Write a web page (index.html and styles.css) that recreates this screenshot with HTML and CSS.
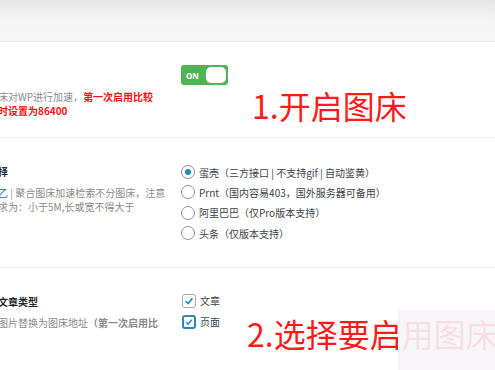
FILE: index.html
```html
<!DOCTYPE html>
<html lang="zh-CN">
<head>
    <meta charset="UTF-8">
    <meta name="viewport" content="width=device-width, initial-scale=1.0">
    <title>图床设置</title>
    <link rel="stylesheet" href="styles.css">
</head>
<body>
    <div class="panel">
        <div class="panel-head"></div>

        <!-- 开启图床 -->
        <div class="opt-row row-switch">
            <div class="opt-info">
                <div class="opt-title">开启图床</div>
                <p class="opt-desc">开启后使用第三方图床对WP进行加速，<strong class="warn">第一次启用比较</strong><br><strong class="warn">耗时，建议将缓存同时设置为86400</strong></p>
            </div>
            <div class="opt-control">
                <span class="switch"><span class="switch-text">ON</span><span class="switch-knob"></span></span>
            </div>
        </div>

        <!-- 图床选择 -->
        <div class="opt-row row-radio">
            <div class="opt-info">
                <div class="opt-title">默认图床接口服务选择</div>
                <p class="opt-desc"><a href="#">查看各图床接口说明乙</a> | 聚合图床加速检索不分图床，注意<br>上传图片格式大小要求为：小于5M,长或宽不得大于</p>
            </div>
            <div class="opt-control">
                <label class="choice"><input type="radio" name="bed" checked>蛋壳（三方接口 | 不支持gif | 自动鉴黄）</label>
                <label class="choice"><input type="radio" name="bed">Prnt（国内容易403，国外服务器可备用）</label>
                <label class="choice"><input type="radio" name="bed">阿里巴巴（仅Pro版本支持）</label>
                <label class="choice"><input type="radio" name="bed">头条（仅版本支持）</label>
            </div>
        </div>

        <!-- 文章类型 -->
        <div class="opt-row row-check">
            <div class="opt-info">
                <div class="opt-title">选择需要启用图床的文章类型</div>
                <p class="opt-desc">开启后将该类型文章图片替换为图床地址<strong>（第一次启用比</strong></p>
            </div>
            <div class="opt-control">
                <label class="choice">
                    <span class="box"><svg viewBox="0 0 14 14" width="14" height="14"><path d="M3.2 7.2 L6 10 L11 3.8" fill="none" stroke="#1e8cbe" stroke-width="2"/></svg></span>文章
                </label>
                <label class="choice">
                    <span class="box focus"><svg viewBox="0 0 14 14" width="14" height="14"><path d="M3.2 7.2 L6 10 L11 3.8" fill="none" stroke="#1e8cbe" stroke-width="2"/></svg></span>页面
                </label>
            </div>
        </div>

        <span class="note note-1">1.开启图床</span>
        <span class="note note-2">2.选择要启用图床</span>
        <div class="veil"></div>
    </div>
</body>
</html>
```

FILE: styles.css
```css
body {
    margin: 0;
    font-family: "Noto Sans CJK SC", "Noto Sans", sans-serif;
    background: #fff;
    overflow: hidden;
}

.panel {
    position: relative;
    width: 495px;
    height: 370px;
    overflow: hidden;
}

.panel-head {
    height: 41px;
    background: linear-gradient(#e5e5e5, #f4f4f4 45%, #f7f7f7);
    border-bottom: 1px solid #ebebeb;
}

.opt-row {
    display: grid;
    grid-template-columns: 273px 1fr;
    margin-left: -92px;
    padding-top: 24px;
    border-bottom: 1px solid #f0f0f0;
}

.row-switch {
    height: 71px;
}

.row-radio {
    height: 105px;
}

.row-check {
    height: 90px;
}

.opt-title {
    font-size: 10px;
    font-weight: bold;
    line-height: 20px;
    color: #23282d;
    white-space: nowrap;
}

.opt-desc {
    margin: 4px 0 0;
    font-size: 10px;
    line-height: 14px;
    color: #8a8a8a;
    white-space: nowrap;
}

.opt-desc a {
    color: #2271b1;
    text-decoration: none;
}

.opt-desc strong {
    color: #8a8a8a;
}

.opt-desc .warn {
    color: #ff1010;
}

.opt-control {
    display: flex;
    flex-direction: column;
    align-items: flex-start;
}

.row-switch .opt-control {
    margin-top: -1px;
}

.row-check .opt-control {
    margin-top: -2px;
}

.switch {
    display: flex;
    align-items: center;
    justify-content: space-between;
    box-sizing: border-box;
    width: 47px;
    height: 20px;
    padding: 0 2px 0 5px;
    background: #4fb453;
    border-radius: 3px;
}

.switch-text {
    font-family: "Noto Sans", sans-serif;
    font-size: 8px;
    font-weight: bold;
    color: #fff;
}

.switch-knob {
    width: 20px;
    height: 16px;
    background: #fff;
    border-radius: 5px;
}

.choice {
    display: flex;
    align-items: center;
    height: 20.3px;
    font-size: 10px;
    color: #3c434a;
    white-space: nowrap;
}

.choice input[type="radio"] {
    appearance: none;
    box-sizing: border-box;
    width: 14px;
    height: 14px;
    margin: 0 4px 0 0;
    border: 1px solid #8c8f94;
    border-radius: 50%;
    background: #fff;
    display: flex;
    align-items: center;
    justify-content: center;
}

.choice input[type="radio"]:checked::before {
    content: "";
    width: 6px;
    height: 6px;
    border-radius: 50%;
    background: #1e8cbe;
}

.row-check .choice {
    height: 21px;
}

.box {
    box-sizing: border-box;
    width: 14px;
    height: 14px;
    margin: 0 4px 0 1px;
    border: 1px solid #a7aaad;
    border-radius: 3px;
    display: flex;
    align-items: center;
    justify-content: center;
}

.box svg {
    width: 12px;
    height: 12px;
}

.box.focus {
    border: 2px solid #2c86b8;
}

.note {
    position: absolute;
    font-size: 32px;
    line-height: 32px;
    color: #ff1a1a;
    white-space: nowrap;
}

.note-1 {
    left: 252px;
    top: 89px;
}

.note-2 {
    left: 247px;
    top: 317px;
}

.veil {
    position: absolute;
    left: 398px;
    top: 310px;
    width: 97px;
    height: 60px;
    background: rgba(246, 244, 247, 0.9);
}
```
